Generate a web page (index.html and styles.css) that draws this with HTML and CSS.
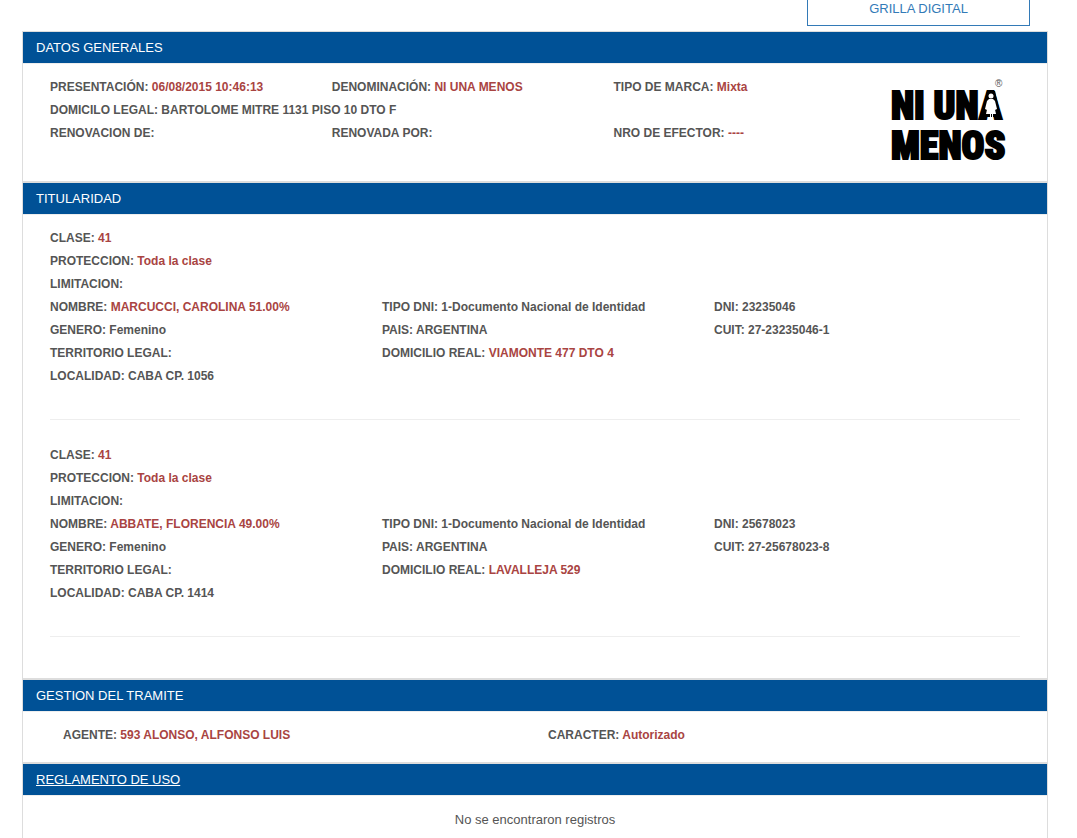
FILE: index.html
```html
<!DOCTYPE html>
<html lang="es">
<head>
    <meta charset="UTF-8">
    <meta name="viewport" content="width=device-width, initial-scale=1.0">
    <title>Datos de la marca</title>
    <link rel="stylesheet" href="styles.css">
</head>
<body>
    <div class="toolbar">
        <a class="btn-grilla" href="#">GRILLA DIGITAL</a>
    </div>

    <div class="panel">
        <h2 class="panel-heading">DATOS GENERALES</h2>
        <div class="panel-body generales">
            <div class="generales-datos">
                <div>PRESENTACIÓN: <span class="valor">06/08/2015 10:46:13</span></div>
                <div>DENOMINACIÓN: <span class="valor">NI UNA MENOS</span></div>
                <div>TIPO DE MARCA: <span class="valor">Mixta</span></div>
                <div class="fila">DOMICILO LEGAL: BARTOLOME MITRE 1131 PISO 10 DTO F</div>
                <div>RENOVACION DE:</div>
                <div>RENOVADA POR:</div>
                <div>NRO DE EFECTOR: <span class="valor">----</span></div>
            </div>
            <svg class="logo" viewBox="0 0 129 88" role="img" aria-label="Ni una menos">
                <g class="logo-texto">
                    <text x="0" y="43">NI UNA</text>
                    <text x="0" y="83">MENOS</text>
                </g>
                <text class="logo-marca" x="104" y="11">®</text>
                <!-- figura dentro de la A -->
                <path d="M96 15h8l6 26H90z"/>
                <g fill="#fff">
                    <circle cx="100" cy="20" r="2.5"/>
                    <path d="M98 23h4l2 2 2 8-2 1-1-5 2 9h-3v6h-1v-6h-1v6h-1v-6h-4l2-9-1 5-2-1 2-8z"/>
                </g>
            </svg>
        </div>
    </div>

    <div class="panel">
        <h2 class="panel-heading">TITULARIDAD</h2>
        <div class="panel-body">
            <div class="titular">
                <div class="fila">CLASE: <span class="valor">41</span></div>
                <div class="fila">PROTECCION: <span class="valor">Toda la clase</span></div>
                <div class="fila">LIMITACION:</div>
                <div>NOMBRE: <span class="valor">MARCUCCI, CAROLINA 51.00%</span></div>
                <div>TIPO DNI: 1-Documento Nacional de Identidad</div>
                <div>DNI: 23235046</div>
                <div>GENERO: Femenino</div>
                <div>PAIS: ARGENTINA</div>
                <div>CUIT: 27-23235046-1</div>
                <div>TERRITORIO LEGAL:</div>
                <div>DOMICILIO REAL: <span class="valor">VIAMONTE 477 DTO 4</span></div>
                <div class="fila">LOCALIDAD: CABA CP. 1056</div>
            </div>
            <hr>
            <div class="titular">
                <div class="fila">CLASE: <span class="valor">41</span></div>
                <div class="fila">PROTECCION: <span class="valor">Toda la clase</span></div>
                <div class="fila">LIMITACION:</div>
                <div>NOMBRE: <span class="valor">ABBATE, FLORENCIA 49.00%</span></div>
                <div>TIPO DNI: 1-Documento Nacional de Identidad</div>
                <div>DNI: 25678023</div>
                <div>GENERO: Femenino</div>
                <div>PAIS: ARGENTINA</div>
                <div>CUIT: 27-25678023-8</div>
                <div>TERRITORIO LEGAL:</div>
                <div>DOMICILIO REAL: <span class="valor">LAVALLEJA 529</span></div>
                <div class="fila">LOCALIDAD: CABA CP. 1414</div>
            </div>
            <hr>
        </div>
    </div>

    <div class="panel">
        <h2 class="panel-heading">GESTION DEL TRAMITE</h2>
        <div class="panel-body gestion">
            <div>AGENTE: <span class="valor">593 ALONSO, ALFONSO LUIS</span></div>
            <div>CARACTER: <span class="valor">Autorizado</span></div>
        </div>
    </div>

    <div class="panel">
        <h2 class="panel-heading"><a href="#">REGLAMENTO DE USO</a></h2>
        <div class="panel-body vacio">No se encontraron registros</div>
    </div>
</body>
</html>
```

FILE: styles.css
```css
* {
    box-sizing: border-box;
}

body {
    margin: 0;
    padding: 0 29px 0 22px;
    font-family: "Liberation Sans", Arial, sans-serif;
    font-size: 12px;
    line-height: 23px;
    color: #555;
    background-color: #fff;
}

/* Boton superior */
.toolbar {
    display: flex;
    justify-content: flex-end;
    margin-top: -10px;
    padding: 0 18px 5px 0;
}

.btn-grilla {
    width: 223px;
    padding: 7px 6px 5px;
    border: 1px solid #337ab7;
    color: #337ab7;
    font-size: 13px;
    line-height: 22px;
    text-align: center;
    text-decoration: none;
}

/* Paneles */
.panel {
    border: 1px solid #ddd;
}

.panel-heading {
    margin: 0;
    padding: 0 13px;
    border-bottom: 1px solid #eee;
    background-color: #005196;
    background-clip: padding-box;
    color: #fff;
    font-size: 13px;
    font-weight: normal;
    line-height: 31px;
}

.panel-heading a {
    color: #fff;
}

.panel-body {
    padding: 12px 27px 17px;
    font-weight: bold;
}

.panel-body hr {
    margin: 31px 0 24px;
    border: 0;
    border-top: 1px solid #eee;
}

.valor {
    color: #a94442;
}

.fila {
    grid-column: 1 / -1;
}

/* Datos generales */
.generales {
    display: flex;
    align-items: flex-start;
}

.generales-datos {
    flex: 1;
    display: grid;
    grid-template-columns: 33.5% 33.5% auto;
}

.logo {
    width: 129px;
    height: 88px;
}

.logo-texto {
    font-family: Impact, "Roboto Condensed", "Open Sans Condensed", "Liberation Sans", sans-serif;
    font-size: 38px;
    font-weight: 900;
    fill: #000;
    stroke: #000;
    stroke-width: 2px;
}

.logo-marca {
    font-size: 10px;
    font-weight: normal;
    fill: #555;
}

/* Titularidad */
.titular {
    display: grid;
    grid-template-columns: repeat(3, 1fr);
    margin-right: -26px;
}

/* Gestion del tramite */
.gestion {
    display: grid;
    grid-template-columns: 1fr 1fr;
    padding: 12px 14px 15px 40px;
}

.vacio {
    padding-bottom: 40px;
    font-size: 13px;
    font-weight: normal;
    text-align: center;
}
```
